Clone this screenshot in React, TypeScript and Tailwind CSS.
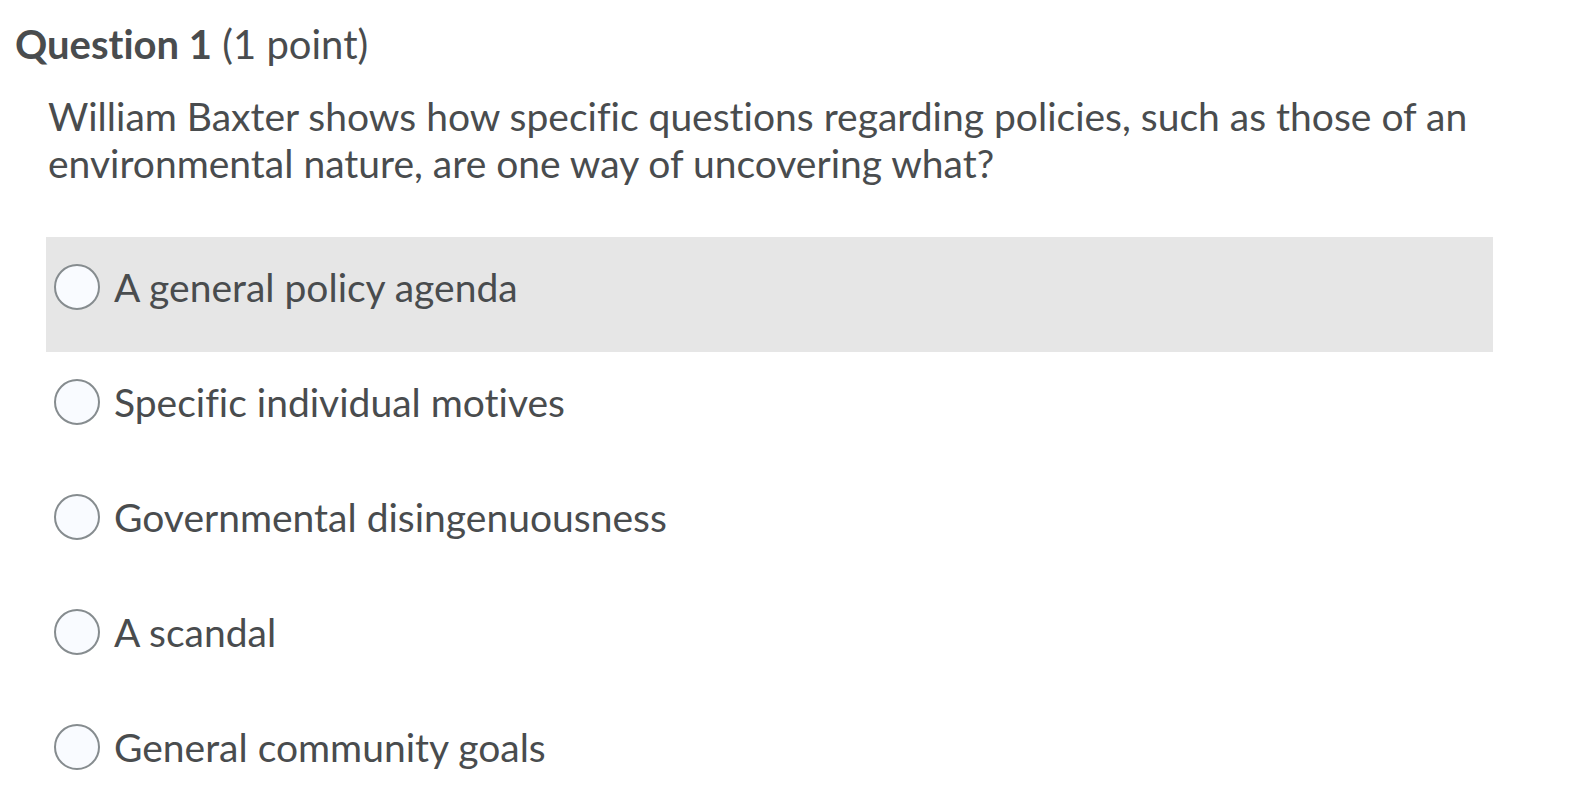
const options = [
  'A general policy agenda',
  'Specific individual motives',
  'Governmental disingenuousness',
  'A scandal',
  'General community goals',
]

export default function App() {
  return (
    <div className="h-[800px] w-full bg-white font-['Lato','Liberation_Sans',sans-serif] text-[#494c4e] [font-variant-ligatures:no-common-ligatures]">
      <h2 className="pl-[15px] pt-[22px] text-[40px] leading-[44px]">
        <span className="font-bold">Question 1</span> (1 point)
      </h2>

      <p className="mt-[27px] ml-[48px] w-[1440px] text-[39px] leading-[47px]">
        William Baxter shows how specific questions regarding policies, such as those of an environmental nature, are one way of uncovering what?
      </p>

      <div className="mt-[50px] ml-[46px] w-[1447px]">
        {options.map((option, i) => (
          <label
            key={option}
            className={`flex h-[115px] items-start pt-[27px] ${i === 0 ? 'bg-[#e6e6e6]' : ''}`}
          >
            <span className="flex h-[46px] items-center gap-[14px] pl-[8px]">
              <span className="h-[46px] w-[46px] shrink-0 rounded-full border-2 border-[#868c8f] bg-[#f9fbff]" />
              <span className="text-[39px] leading-[46px]">{option}</span>
            </span>
          </label>
        ))}
      </div>
    </div>
  )
}
